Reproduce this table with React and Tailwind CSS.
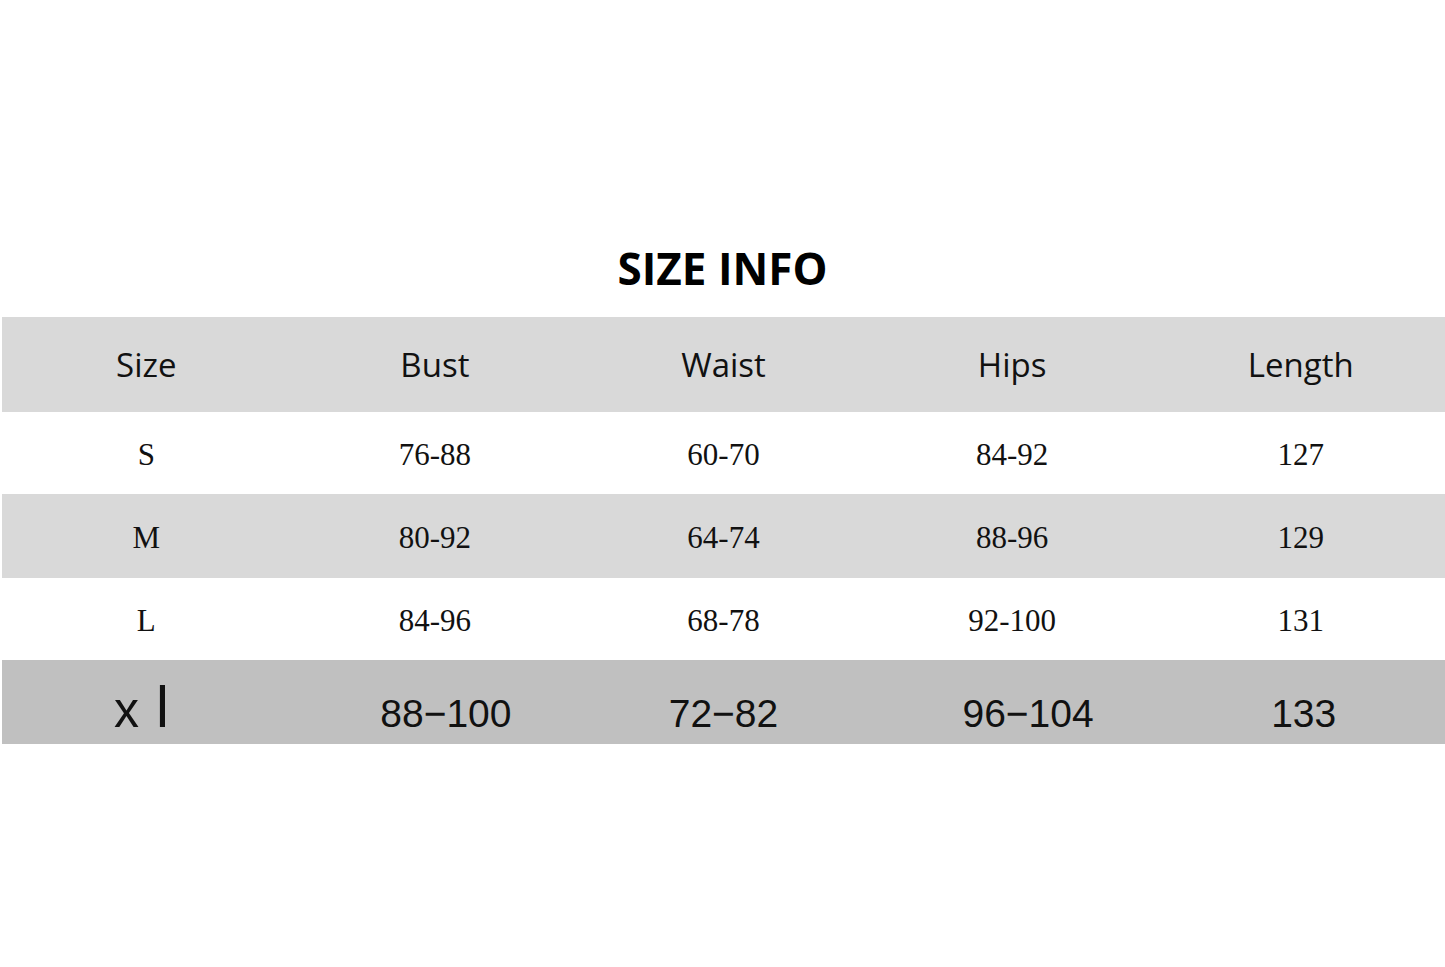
const header = ["Size", "Bust", "Waist", "Hips", "Length"];

const rows = [
  { cells: ["S", "76-88", "60-70", "84-92", "127"], bg: "bg-white", h: "h-[82px]" },
  { cells: ["M", "80-92", "64-74", "88-96", "129"], bg: "bg-[#d9d9d9]", h: "h-[84px]" },
  { cells: ["L", "84-96", "68-78", "92-100", "131"], bg: "bg-white", h: "h-[82px]" },
];

const xl = [
  { text: "88−100", cls: "pl-[22px]" },
  { text: "72−82", cls: "" },
  { text: "96−104", cls: "pl-[32px]" },
  { text: "133", cls: "pl-[6px]" },
];

export default function App() {
  return (
    <div className="w-[1445px] h-[967px] bg-white overflow-hidden">
      <h1 className="pt-[238px] mb-[19px] text-center text-[44px] leading-[60px] font-bold text-black font-['Open_Sans',sans-serif]">
        SIZE INFO
      </h1>

      <div className="ml-[2px]">
        {/* header */}
        <div className="grid grid-cols-5 h-[95px] bg-[#d9d9d9] items-center">
          {header.map((h) => (
            <div
              key={h}
              className="text-center text-[33px] text-[#111] font-['Open_Sans',sans-serif]"
            >
              {h}
            </div>
          ))}
        </div>

        {rows.map((row, i) => (
          <div key={i} className={`grid grid-cols-5 items-center ${row.bg} ${row.h}`}>
            {row.cells.map((c, j) => (
              <div
                key={j}
                className="text-center text-[31px] text-[#111] font-['Liberation_Serif',serif] pt-[4px]"
              >
                {c}
              </div>
            ))}
          </div>
        ))}

        {/* xl row */}
        <div className="grid grid-cols-5 items-baseline h-[84px] pt-[18px] bg-[#c0c0c0] leading-none text-[#111] font-['Liberation_Sans',sans-serif]">
          <div className="flex items-baseline pl-[112px]">
            <span className="text-[50px]">x</span>
            <span className="text-[58px] ml-[17px]">l</span>
          </div>
          {xl.map((c, j) => (
            <div key={j} className={`text-center text-[39px] ${c.cls}`}>
              {c.text}
            </div>
          ))}
        </div>
      </div>
    </div>
  );
}
